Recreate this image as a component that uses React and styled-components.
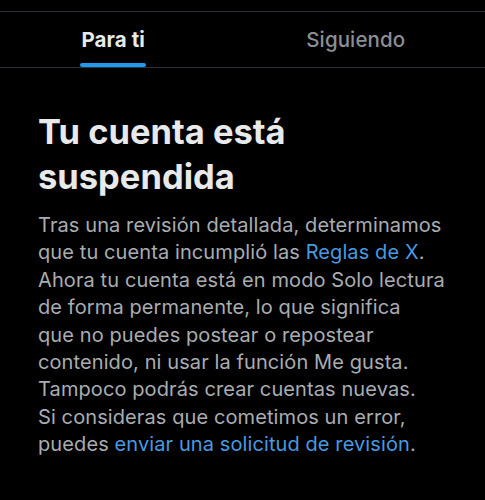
import styled, { createGlobalStyle } from "styled-components";

const GlobalStyle = createGlobalStyle`
  html, body {
    margin: 0;
    padding: 0;
    background: #000;
  }
  body {
    font-family: Inter, "Noto Sans", "Liberation Sans", sans-serif;
    -webkit-font-smoothing: antialiased;
  }
`;

const Screen = styled.div`
  width: 485px;
  height: 500px;
  background: #000;
  padding-top: 11px;
  box-sizing: border-box;
  overflow: hidden;
`;

const TabBar = styled.nav`
  display: flex;
  height: 55px;
  border-top: 1px solid #2f3336;
  border-bottom: 1px solid #2f3336;
`;

const Tab = styled.div`
  flex: 1;
  display: flex;
  justify-content: center;
  padding-right: 16px;
`;

const TabLabel = styled.span`
  position: relative;
  display: flex;
  align-items: center;
  font-size: 20.5px;
  letter-spacing: 0.1px;
  font-weight: ${(p) => (p.$active ? 700 : 500)};
  color: ${(p) => (p.$active ? "#e7e9ea" : "#8b8f94")};

  &::after {
    content: "";
    display: ${(p) => (p.$active ? "block" : "none")};
    position: absolute;
    left: -1px;
    right: -1px;
    bottom: 0;
    height: 4px;
    border-radius: 2px;
    background: #1d9bf0;
  }
`;

const Content = styled.section`
  padding: 41px 38px 0;
`;

const Title = styled.h1`
  margin: 0 0 13px;
  font-size: 34.5px;
  line-height: 45px;
  font-weight: 700;
  color: #e7e9ea;
`;

const Body = styled.p`
  margin: 0;
  font-size: 20px;
  line-height: 27.4px;
  letter-spacing: 0.1px;
  color: #a9adb1;
`;

const TextLink = styled.a`
  color: #4a99e0;
  text-decoration: none;
`;

export default function App() {
  return (
    <>
      <GlobalStyle />
      <Screen>
        <TabBar>
          <Tab>
            <TabLabel $active>Para ti</TabLabel>
          </Tab>
          <Tab>
            <TabLabel>Siguiendo</TabLabel>
          </Tab>
        </TabBar>
        <Content>
          <Title>
            Tu cuenta está
            <br />
            suspendida
          </Title>
          <Body>
            Tras una revisión detallada, determinamos
            <br />
            que tu cuenta incumplió las <TextLink href="#">Reglas de X</TextLink>.
            <br />
            Ahora tu cuenta está en modo Solo lectura
            <br />
            de forma permanente, lo que significa
            <br />
            que no puedes postear o repostear
            <br />
            contenido, ni usar la función Me gusta.
            <br />
            Tampoco podrás crear cuentas nuevas.
            <br />
            Si consideras que cometimos un error,
            <br />
            puedes <TextLink href="#">enviar una solicitud de revisión</TextLink>.
          </Body>
        </Content>
      </Screen>
    </>
  );
}
